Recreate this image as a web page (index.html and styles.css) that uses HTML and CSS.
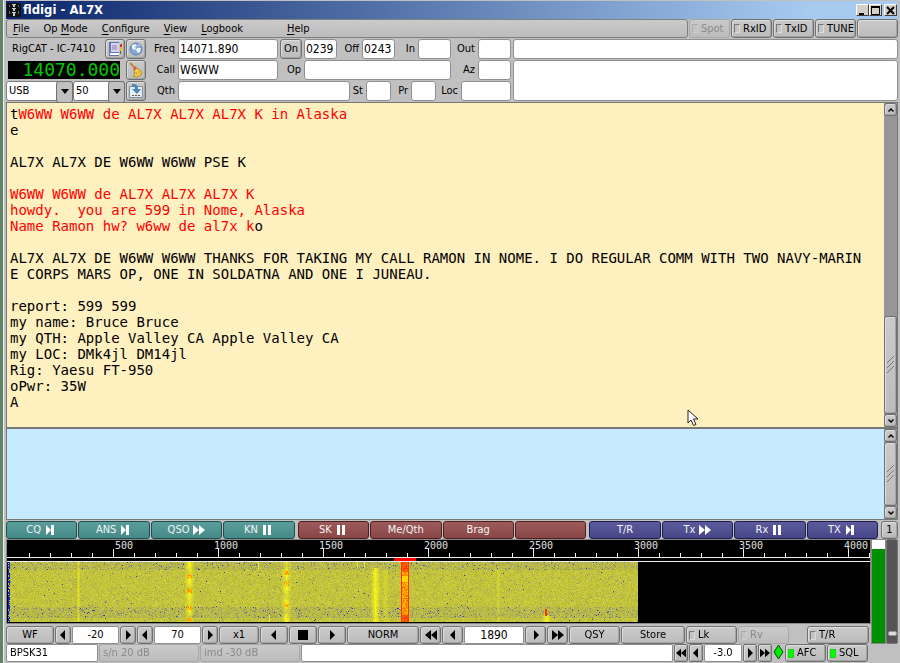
FILE: index.html
```html
<!DOCTYPE html>
<html lang="en">
<head>
<meta charset="utf-8">
<title>fldigi - AL7X</title>
<link rel="stylesheet" href="styles.css">
</head>
<body>
<svg class="defs" aria-hidden="true">
  <symbol id="left" viewBox="0 0 10 10"><path d="M7 0v10L2 5z"/></symbol>
  <symbol id="right" viewBox="0 0 10 10"><path d="M3 0v10l5-5z"/></symbol>
  <symbol id="left2" viewBox="0 0 12 10"><path d="M6 0v10L0 5zM12 0v10L6 5z"/></symbol>
  <symbol id="right2" viewBox="0 0 12 10"><path d="M0 0v10l6-5zM6 0v10l6-5z"/></symbol>
  <symbol id="next" viewBox="0 0 12 10"><path d="M1 0v10l5-5zM6 0h3v10H6z"/></symbol>
  <symbol id="pause" viewBox="0 0 12 10"><path d="M1 0h3v10H1zM6 0h3v10H6z"/></symbol>
</svg>
<div class="window">
  <header class="title">
    <svg width="14" height="14" viewBox="0 0 14 14"><path fill="#111" d="M0 0h14v14H0z"/><path fill="#ccc" d="M5 1h4v1H5zM6 2h2v2H6zM5 5h4v1H5zM6 6h2v2H6zM5 9h4v1H5zM6 10h2v3H6z"/><path fill="#666" d="M2 2h1v2H2zM11 2h1v2h-1zM2 8h1v3H2zM11 8h1v3h-1z"/></svg>
    <h1>fldigi - AL7X</h1>
    <button class="win" aria-label="Minimize"><svg width="9" height="9"><path d="M1 7h5v2H1z"/></svg></button>
    <button class="win" aria-label="Maximize"><svg width="9" height="9"><path fill-rule="evenodd" d="M0 0h9v9H0zM1 2v6h7V2z"/></svg></button>
    <button class="win close" aria-label="Close"><svg width="9" height="9"><path d="M1 1l7 7M8 1L1 8" stroke="#000" stroke-width="2"/></svg></button>
  </header>

  <div class="menurow">
    <nav class="menubar">
      <button><u>F</u>ile</button><button>Op <u>M</u>ode</button><button><u>C</u>onfigure</button><button><u>V</u>iew</button><button><u>L</u>ogbook</button><button class="help"><u>H</u>elp</button>
    </nav>
    <label class="btn toggle off"><input type="checkbox" disabled>Spot</label>
    <label class="btn toggle"><input type="checkbox">RxID</label>
    <label class="btn toggle"><input type="checkbox">TxID</label>
    <label class="btn toggle"><input type="checkbox">TUNE</label>
    <span class="btn blank"></span>
  </div>

  <section class="log">
    <div class="rig">
      <div class="rigrow">
        <span class="rigname">RigCAT - IC-7410</span>
        <button class="btn" aria-label="Logbook entry"><svg width="16" height="16" viewBox="0 0 16 16"><path fill="#6674b4" d="M2 1h10v14H2z"/><path fill="#cfd6f2" d="M4 2h8v9H4z"/><path fill="#b9a6d0" d="M5 4h5v5H5z"/><path fill="#fff" d="M3 12h9v2H3z"/><path fill="#e03020" d="M13 3h2v3h-2z"/><path fill="#e8c020" d="M13 6h2v4h-2z"/><path fill="#555" d="M13 10h1v3h-1z"/></svg></button>
        <button class="btn" aria-label="Look up call"><svg width="16" height="16" viewBox="0 0 16 16"><circle cx="8" cy="8" r="6" fill="#86a9d8" stroke="#5c7eb4"/><path fill="#eef3f6" d="M4 4l3-1 2 2-2 1 1 2-2 1-2-2zM9 7l4 0-1 4-2 1-2-3zM10 3l2 1-1 1z"/></svg></button>
      </div>
      <div class="rigrow">
        <output class="led" aria-label="Rig frequency">14070.000</output>
        <button class="btn" aria-label="Clear"><svg width="16" height="16" viewBox="0 0 16 16"><path d="M2 1l4 4" stroke="#b8863a" stroke-width="2"/><path fill="#d8604a" d="M5 6l2-2 2 2-3 3z"/><path fill="#f4d34c" stroke="#b88a18" d="M6 9l3-3 5 4-1 3-4 2-4-1 2-2z"/><path d="M8 10l1 3M10 9l2 3" stroke="#c89a28"/></svg></button>
      </div>
      <div class="rigrow tight">
        <span class="combo mode"><select aria-label="Rig mode"><option>USB</option></select></span>
        <span class="combo bw"><select aria-label="Bandwidth"><option>50</option></select></span>
        <button class="btn" aria-label="Save log"><svg width="16" height="16" viewBox="0 0 16 16"><path fill="#e8edf0" stroke="#7a8ea0" d="M1.500 3.500h13v11h-13z"/><path fill="#4a86b8" d="M4 1c4 0 6 1 6 5h3l-4 5-5-5h3c0-2-1-3-3-3z"/><path d="M4 12.500h2M7 12.500h2M10 12.500h2" stroke="#555"/></svg></button>
      </div>
    </div>
    <div class="fields">
      <div class="frow one">
        <label for="freq">Freq</label><input id="freq" value="14071.890">
        <button class="btn">On</button><input aria-label="Time on" value="0239">
        <label for="off">Off</label><input id="off" value="0243">
        <label for="in">In</label><input id="in">
        <label for="out">Out</label><input id="out">
      </div>
      <div class="frow two">
        <label for="call">Call</label><input id="call" value="W6WW">
        <label for="op">Op</label><input id="op">
        <label for="az">Az</label><input id="az">
      </div>
      <div class="frow three">
        <label for="qth">Qth</label><input id="qth">
        <label for="st">St</label><input id="st">
        <label for="pr">Pr</label><input id="pr">
        <label for="loc">Loc</label><input id="loc">
      </div>
    </div>
    <div class="notes">
      <input aria-label="Country">
      <textarea aria-label="Notes"></textarea>
    </div>
  </section>

  <section class="pane rx">
<pre>t<b>W6WW W6WW de AL7X AL7X AL7X K in Alaska</b>
e

AL7X AL7X DE W6WW W6WW PSE K

<b>W6WW W6WW de AL7X AL7X AL7X K</b>
<b>howdy.  you are 599 in Nome, Alaska</b>
<b>Name Ramon hw? w6ww de al7x k</b>o

AL7X AL7X DE W6WW W6WW THANKS FOR TAKING MY CALL RAMON IN NOME. I DO REGULAR COMM WITH TWO NAVY-MARIN
E CORPS MARS OP, ONE IN SOLDATNA AND ONE I JUNEAU.

report: 599 599
my name: Bruce Bruce
my QTH: Apple Valley CA Apple Valley CA
my LOC: DMk4jl DM14jl
Rig: Yaesu FT-950
oPwr: 35W
A</pre>
    <div class="scroll">
      <button class="btn" aria-label="Scroll up"><svg width="6" height="4"><path d="M3 0l3 3-1 1-2-2-2 2-1-1z"/></svg></button>
      <div class="track"></div>
      <div class="btn thumb"><svg width="8" height="18"><path d="M0 7l7-7M0 12l7-7M0 17l7-7" stroke="#777"/></svg></div>
      <button class="btn" aria-label="Scroll down"><svg width="6" height="4"><path d="M3 4l3-3-1-1-2 2-2-2-1 1z"/></svg></button>
    </div>
    <svg class="pointer" width="12" height="18" viewBox="0 0 12 18"><path d="M1 1v13l3-3 2.500 5.500 2.500-1L6.500 10H11z" fill="#fff" stroke="#222"/></svg>
  </section>

  <section class="pane tx">
    <textarea aria-label="Transmit text"></textarea>
    <div class="scroll">
      <button class="btn" aria-label="Scroll up"><svg width="6" height="4"><path d="M3 0l3 3-1 1-2-2-2 2-1-1z"/></svg></button>
      <div class="btn thumb"><svg width="8" height="18"><path d="M0 7l7-7M0 12l7-7M0 17l7-7" stroke="#777"/></svg></div>
      <button class="btn" aria-label="Scroll down"><svg width="6" height="4"><path d="M3 4l3-3-1-1-2 2-2-2-1 1z"/></svg></button>
    </div>
  </section>

  <section class="macros">
    <div class="group teal">
      <button>CQ <svg><use href="#next"/></svg></button><button>ANS <svg><use href="#next"/></svg></button><button>QSO <svg><use href="#right2"/></svg></button><button>KN <svg><use href="#pause"/></svg></button>
    </div>
    <div class="group maroon">
      <button>SK <svg><use href="#pause"/></svg></button><button>Me/Qth</button><button>Brag</button><button aria-label="Unassigned"></button>
    </div>
    <div class="group indigo">
      <button>T/R</button><button>Tx <svg><use href="#right2"/></svg></button><button>Rx <svg><use href="#pause"/></svg></button><button>TX <svg><use href="#next"/></svg></button>
    </div>
    <button class="btn set">1</button>
  </section>

  <section class="lower">
    <div class="main">
      <div class="waterfall">
        <svg class="scale" id="scale" width="2000" height="22"></svg>
        <canvas id="fall" width="630" height="60"></canvas>
      </div>
      <div class="controls">
        <button class="btn w48">WF</button>
        <button class="btn w16" aria-label="Lower level"><svg><use href="#left"/></svg></button>
        <input class="w47" aria-label="Upper level" value="-20">
        <button class="btn w16" aria-label="Raise level"><svg><use href="#right"/></svg></button>
        <button class="btn w16" aria-label="Less range"><svg><use href="#left"/></svg></button>
        <input class="w47" aria-label="Range" value="70">
        <button class="btn w16" aria-label="More range"><svg><use href="#right"/></svg></button>
        <button class="btn w40">x1</button>
        <button class="btn w28" aria-label="Shift left"><svg><use href="#left"/></svg></button>
        <button class="btn w28" aria-label="Center"><svg viewBox="0 0 10 10"><path d="M0 0h10v10H0z"/></svg></button>
        <button class="btn w28" aria-label="Shift right"><svg><use href="#right"/></svg></button>
        <button class="btn w72">NORM</button>
        <button class="btn w21" aria-label="Fast down"><svg><use href="#left2"/></svg></button>
        <button class="btn w21" aria-label="Down"><svg><use href="#left"/></svg></button>
        <input class="w60 big" aria-label="Audio frequency" value="1890">
        <button class="btn w21" aria-label="Up"><svg><use href="#right"/></svg></button>
        <button class="btn w21" aria-label="Fast up"><svg><use href="#right2"/></svg></button>
        <button class="btn w51">QSY</button>
        <button class="btn w64">Store</button>
        <label class="btn toggle w51"><input type="checkbox">Lk</label>
        <label class="btn toggle off w51"><input type="checkbox" disabled>Rv</label>
        <label class="btn toggle w62 last"><input type="checkbox">T/R</label>
      </div>
    </div>
    <div class="meter"><div></div></div>
    <div class="squelch"><div></div></div>
  </section>

  <footer class="status">
    <input class="mode" aria-label="Mode" value="BPSK31">
    <span class="btn off sn">s/n 20 dB</span>
    <span class="btn off sn">imd -30 dB</span>
    <input class="msg" aria-label="Status">
    <button class="btn w14" aria-label="Much lower"><svg><use href="#left2"/></svg></button>
    <button class="btn w14" aria-label="Lower"><svg><use href="#left"/></svg></button>
    <input class="w38" aria-label="Power" value="-3.0">
    <button class="btn w14" aria-label="Higher"><svg><use href="#right"/></svg></button>
    <button class="btn w14" aria-label="Much higher"><svg><use href="#right2"/></svg></button>
    <svg class="diamond" width="11" height="16" viewBox="0 0 11 16"><path d="M5.500 1L10 8l-4.500 7L1 8z" fill="#0e0" stroke="#064a06"/></svg>
    <label class="btn toggle w41"><input type="checkbox" checked>AFC</label>
    <label class="btn toggle w41"><input type="checkbox" checked>SQL</label>
  </footer>
</div>
<script src="waterfall.js"></script>
</body>
</html>
```
FILE: styles.css
```css
* { box-sizing: border-box; }
body {
  margin: 0;
  background: #c0c0c0;
  color: #000;
  font: 11px/14px "DejaVu Sans Condensed", "DejaVu Sans", sans-serif;
  overflow: hidden;
}
button, input, select, textarea {
  font: inherit;
  color: inherit;
  margin: 0;
  padding: 0;
  min-width: 0;
  border-radius: 0;
}
svg { display: block; }
.defs { position: absolute; width: 0; height: 0; }

.window {
  min-height: 100vh;
  border-left: 3px solid #5f8566;
  padding: 1px 2px 0 3px;
  box-shadow: inset 1px 0 #eee;
}

.title {
  display: flex;
  align-items: center;
  height: 18px;
  padding: 0 1px;
  background: linear-gradient(90deg, #0a246a, #a6caf0 90%);
}
.title h1 {
  flex: 1;
  margin: 0 0 0 2px;
  color: #fff;
  font-size: 13px;
  font-weight: bold;
}
.win {
  display: grid;
  place-items: center;
  width: 13px;
  height: 12px;
  background: #d4d0c8;
  border: 1px solid;
  border-color: #fff #404040 #404040 #fff;
}
.close { margin-left: 2px; }

.btn {
  display: flex;
  align-items: center;
  justify-content: center;
  background: linear-gradient(#cacaca, #bcbcbc);
  border: 1px solid #707070;
  border-radius: 3px;
  box-shadow: inset 1px 1px #ddd, inset -1px -1px #a4a4a4;
  white-space: nowrap;
}
.toggle { justify-content: flex-start; padding-left: 2px; gap: 3px; }
.toggle input {
  flex: none;
  appearance: none;
  width: 6px;
  height: 9px;
  border: 1px solid;
  border-color: #777 #ddd #ddd #777;
  background: #c4c4c4;
}
.toggle input:checked { background: #0f0; border-color: #2c2; }
.off { color: #8a8a8a; border-color: #a8a8a8; box-shadow: none; }
.off input { border-color: #aaa #ccc #ccc #aaa; }

.menurow { display: flex; height: 19px; gap: 1px; }
.menubar {
  flex: 1;
  display: flex;
  gap: 14px;
  padding-left: 6px;
  background: linear-gradient(#cacaca, #bcbcbc);
  border: 1px solid #808080;
  border-radius: 3px;
}
.menubar button { background: none; border: 0; }
.menubar u { text-underline-offset: 2px; }
.menubar .help { margin-left: 30px; }
.menurow .btn { width: 41px; }

.log { display: flex; gap: 2px; height: 64px; }
.rig { width: 141px; }
.rigrow { display: flex; align-items: center; gap: 1px; height: 21px; padding-right: 1px; }
.rigrow .btn { width: 20px; height: 20px; }
.rigname { flex: 1; padding-left: 6px; }
.led {
  width: 112px;
  height: 18px;
  margin: 0 auto 0 2px;
  background: #000;
  color: #00c800;
  font: 18px/18px "DejaVu Sans Mono", monospace;
  text-align: right;
}
.tight { gap: 0; }
.combo { position: relative; height: 20px; }
.combo select {
  appearance: none;
  width: 100%;
  height: 100%;
  padding-left: 2px;
  background: #fff;
  border: 1px solid #808080;
  border-radius: 3px;
}
.combo::before {
  content: "";
  position: absolute;
  right: 0;
  width: 15px;
  height: 20px;
  border: 1px solid #707070;
  border-radius: 3px;
  background: #c0c0c0;
  pointer-events: none;
}
.combo::after {
  content: "";
  position: absolute;
  right: 4px;
  top: 8px;
  border: 4px solid transparent;
  border-top: 5px solid #000;
  border-bottom: 0;
  pointer-events: none;
}
.mode { width: 67px; }
.bw { width: 52px; margin-right: 1px; }

.fields { width: 362px; }
.frow { display: grid; gap: 2px; height: 21px; align-items: center; }
.frow label { text-align: right; padding-right: 1px; }
.frow input, .notes input, .notes textarea {
  display: block;
  width: 100%;
  height: 20px;
  padding-left: 1px;
  background: #fff;
  border: 1px solid #909090;
  border-radius: 3px;
  font-size: 12px;
}
.frow .btn { height: 20px; }
.one { grid-template-columns: 27px 100px 22px 33px 21px 33px 19px 33px 23px 33px; }
.two { grid-template-columns: 27px 100px 22px 147px 23px 33px; }
.three { grid-template-columns: 27px 172px 12px 25px 16px 25px 21px 50px; }
.notes { flex: 1; padding-top: 1px; }
.notes textarea { height: 41px; margin-top: 1px; resize: none; }

.pane { position: relative; display: flex; border: 1px solid #777; }
.pane pre, .pane textarea {
  flex: 1;
  margin: 0;
  padding: 3px;
  font: 14px/16px "DejaVu Sans Mono", monospace;
}
.rx { height: 326px; background: #fff0c0; }
.rx b { color: #f00; font-weight: normal; }
.tx { height: 92px; background: #c6eaff; }
.tx textarea { background: none; border: 0; resize: none; }
.scroll { display: flex; flex-direction: column; width: 13px; background: #969696; }
.scroll button { height: 13px; }
.track { flex: 203; }
.thumb { flex: 97; }
.pointer { position: absolute; left: 680px; top: 306px; }

.macros { display: flex; gap: 3px; height: 19px; padding-top: 1px; }
.group { flex: 1; display: grid; grid-template-columns: repeat(4, 1fr); gap: 1px; }
.group button {
  display: flex;
  align-items: center;
  justify-content: center;
  gap: 4px;
  color: #f4f4f4;
  border: 1px solid;
  border-radius: 3px;
}
.group svg { width: 12px; height: 10px; fill: #fff; }
.teal button { background: linear-gradient(#5a9e9c, #468a88); border-color: #1d4f4e; }
.maroon button { background: linear-gradient(#9c5a5a, #884646); border-color: #4f1d1d; }
.indigo button { background: linear-gradient(#5a5a9c, #464688); border-color: #1d1d4f; }
.set { width: 17px; }

.lower { display: flex; height: 105px; }
.main { flex: 1; min-width: 0; }
.waterfall {
  height: 85px;
  overflow: hidden;
  background: #000;
  border: 1px solid #888;
}
.waterfall canvas { display: block; margin-left: 1px; }
.scale { font: 10px "DejaVu Sans Mono", monospace; fill: #e0e0e0; }
.meter { width: 15px; padding: 9px 0 0; background: #fff; border: 1px solid #888; }
.meter div { height: 100%; background: #009000; }
.squelch {
  width: 12px;
  display: flex;
  align-items: flex-end;
  justify-content: center;
  padding-bottom: 7px;
  background: #555;
  border: 1px solid #777;
  border-radius: 2px;
}
.squelch div { width: 9px; height: 5px; background: #ddd; border: 1px solid #999; border-radius: 2px; }

.controls { display: flex; gap: 1px; height: 19px; padding-top: 1px; margin-top: 1px; }
.controls input:not([type]), .status input:not([type]) {
  background: #fff;
  border: 1px solid #909090;
  border-radius: 2px;
  text-align: center;
}
.controls .big { font-size: 12px; }
.controls button svg, .status button svg { flex: none; width: 12px; height: 10px; }
.w14 { width: 14px; }
.w16 { width: 16px; }
.w21 { width: 21px; }
.w28 { width: 28px; }
.w38 { width: 38px; }
.w40 { width: 40px; }
.w41 { width: 41px; }
.w47 { width: 47px; }
.w48 { width: 48px; }
.w51 { width: 51px; }
.w60 { width: 60px; }
.w62 { width: 62px; }
.w64 { width: 64px; }
.w72 { width: 72px; }
.last { margin-left: auto; margin-right: 2px; }

.status { display: flex; gap: 1px; height: 18px; padding-right: 30px; }
.status input.mode { width: 92px; padding-left: 3px; text-align: left; }
.sn { width: 100px; justify-content: flex-start; padding-left: 3px; }
.msg { flex: 1; }
.status .w14 { border-radius: 2px; }
.status button svg { width: 10px; height: 10px; }
```
FILE: waterfall.js
```js
// Frequency scale: 0.21 px per Hz, a minor tick each 100 Hz.
const scale = document.getElementById('scale');
let marks = '<path fill="#eee" d="M0 17h2000v1H0zM0 21h2000v1H0z';
let texts = '';
for (let hz = 100; hz <= 4100; hz += 100) {
  const x = Math.round(hz * 0.21) + 1;
  const major = hz % 500 === 0;
  marks += major ? `M${x} 9h1v8h-1z` : `M${x} 13h1v4h-1z`;
  if (major) texts += `<text x="${x + (hz === 500 ? 11 : 8)}" y="9" text-anchor="middle">${hz}</text>`;
}
scale.innerHTML = marks + '"/><path fill="#f00" d="M387 18h22v3h-22z"/>' + texts;

// Waterfall: receiver noise with a few PSK signals on top.
let seed = 7410;
function rnd() {
  seed = (seed * 1664525 + 1013904223) >>> 0;
  return seed / 4294967296;
}
const canvas = document.getElementById('fall');
const ctx = canvas.getContext('2d');
const W = canvas.width, H = canvas.height;
const img = ctx.createImageData(W, H);
const stations = [
  { x: 181, w: 4, top: 0, gain: 0.9, hot: [14, 28, 45, 58] },
  { x: 278, w: 4, top: 0, gain: 0.9, hot: [10, 21, 43] },
  { x: 367, w: 4, top: 6, gain: 0.8, hot: [] },
  { x: 377, w: 3, top: 8, gain: 0.3, hot: [] },
  { x: 70, w: 1, top: 0, gain: 0.45, hot: [] },
  { x: 490, w: 1, top: 5, gain: 0.3, hot: [] },
  { x: 538, w: 4, top: 53, gain: 0.8, hot: [] }
];
for (let y = 0; y < H; y++) {
  const quiet = (y < 8 || (y > 44 && y < 56)) ? 1 : 0;
  for (let x = 0; x < W; x++) {
    const n = (rnd() + rnd()) / 2;
    let r = 172 + n * 44 - quiet * 10;
    let g = 174 + n * 42 - quiet * 10;
    let b = 42 + rnd() * 38 + quiet * 12;
    if (rnd() < (quiet ? 0.08 : 0.012)) { r = 110 + n * 50; g = 112 + n * 50; b = 100 + rnd() * 60; }
    if (rnd() < (quiet ? 0.014 : 0.002)) { r = 50; g = 60; b = 190; }
    for (const s of stations) {
      const d = Math.abs(x - s.x);
      if (d > s.w || y < s.top) continue;
      const pulse = s.hot.length ? 0.75 + 0.25 * Math.cos(y * 0.42 + s.x) : 1;
      const k = Math.min(1, s.gain * pulse * (1 - d / (s.w + 1)) * (0.8 + rnd() * 0.5));
      r += (255 - r) * k;
      g += (250 - g) * k;
      b += (10 - b) * k * 0.8;
      if (d < 3 && s.hot.some(h => Math.abs(h - y) < 1 + rnd() * 2) && rnd() < 0.7) { r = 255; g = 130 + rnd() * 60; b = 0; }
    }
    if (x >= 393 && x <= 400) {
      const edge = x === 393 || x === 400;
      r = 255;
      g = edge ? 50 : 100 + rnd() * 100;
      if (!edge && (y < 10 || y > 52)) g = 50 + rnd() * 70;
      if (!edge && y > 13 && y < 20) g = 190 + rnd() * 50;
      b = 0;
    }
    if ((x === 349 || x === 356) && y < 6 || x === 250 && y < 8 || x === 261 && y > 51) { r = 235; g = 230; b = 60; }
    if ((x === 537 || x === 538) && y > 46 && y < 54) { r = 255; g = 50; b = 0; }
    if (x < 2 && rnd() < 0.7) { r = 20; g = 30; b = 210; }
    img.data.set([r, g, b, 255], (y * W + x) * 4);
  }
}
ctx.putImageData(img, 0, 0);
```
